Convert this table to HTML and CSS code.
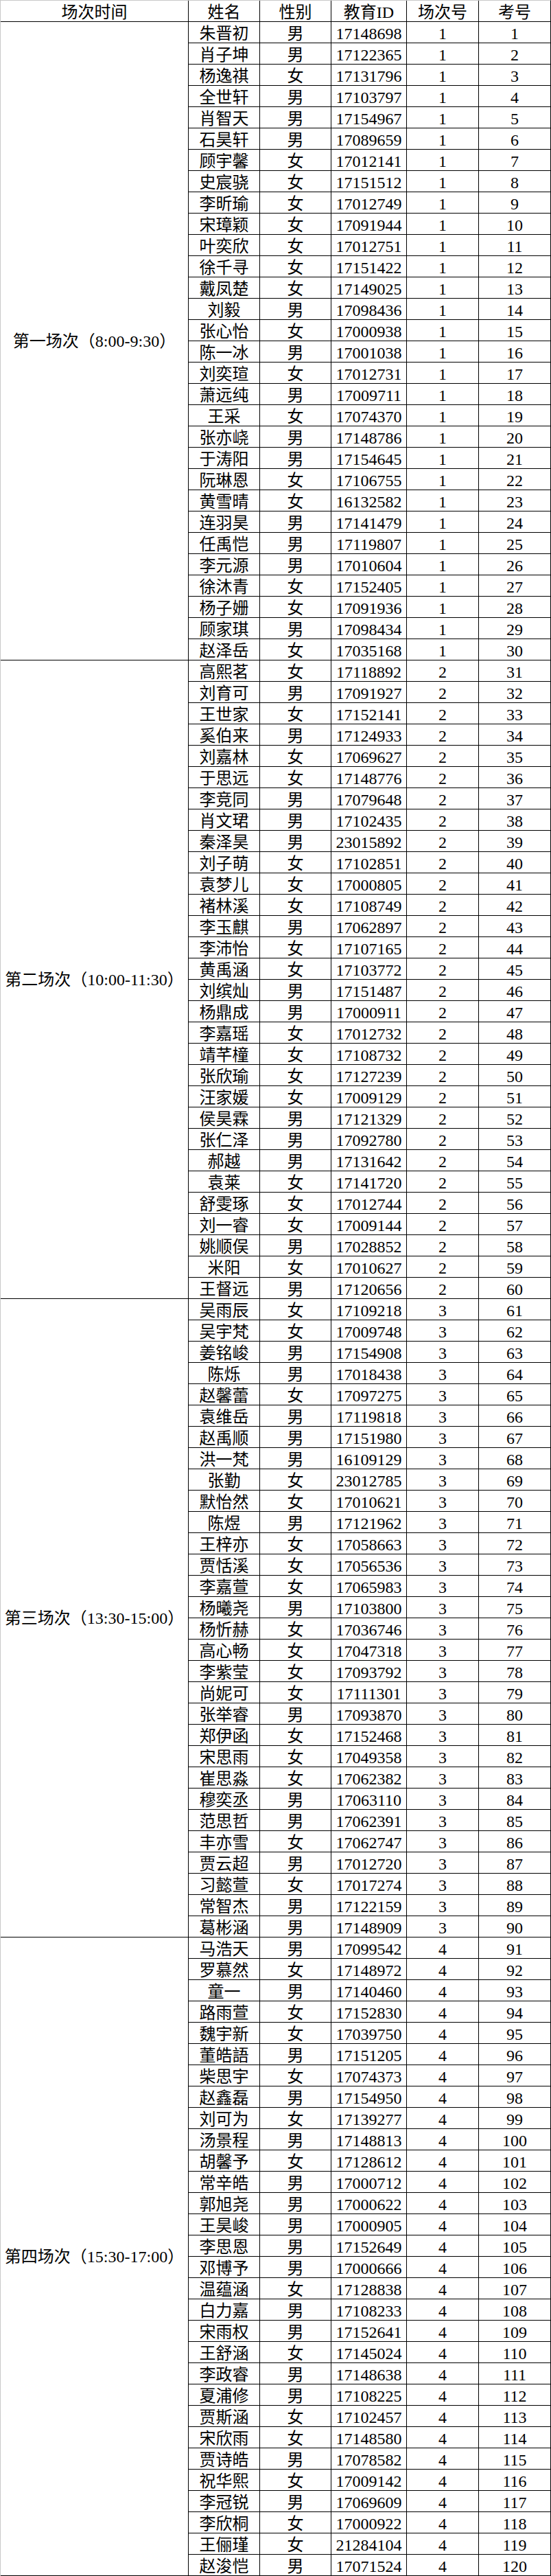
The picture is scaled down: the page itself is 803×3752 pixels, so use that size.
FILE: index.html
```html
<!DOCTYPE html>
<html lang="zh-CN">
<head>
<meta charset="utf-8">
<title>场次安排</title>
<link rel="stylesheet" href="styles.css">
</head>
<body>
<div class="sheet">
<div class="cell first">场次时间</div><div class="cell">姓名</div><div class="cell">性别</div><div class="cell">教育ID</div><div class="cell">场次号</div><div class="cell">考号</div>

<div class="cell sess">第一场次（8:00-9:30）</div>
<div class="cell">朱晋初</div><div class="cell">男</div><div class="cell">17148698</div><div class="cell">1</div><div class="cell">1</div>
<div class="cell">肖子坤</div><div class="cell">男</div><div class="cell">17122365</div><div class="cell">1</div><div class="cell">2</div>
<div class="cell">杨逸祺</div><div class="cell">女</div><div class="cell">17131796</div><div class="cell">1</div><div class="cell">3</div>
<div class="cell">全世轩</div><div class="cell">男</div><div class="cell">17103797</div><div class="cell">1</div><div class="cell">4</div>
<div class="cell">肖智天</div><div class="cell">男</div><div class="cell">17154967</div><div class="cell">1</div><div class="cell">5</div>
<div class="cell">石昊轩</div><div class="cell">男</div><div class="cell">17089659</div><div class="cell">1</div><div class="cell">6</div>
<div class="cell">顾宇馨</div><div class="cell">女</div><div class="cell">17012141</div><div class="cell">1</div><div class="cell">7</div>
<div class="cell">史宸骁</div><div class="cell">女</div><div class="cell">17151512</div><div class="cell">1</div><div class="cell">8</div>
<div class="cell">李昕瑜</div><div class="cell">女</div><div class="cell">17012749</div><div class="cell">1</div><div class="cell">9</div>
<div class="cell">宋璋颖</div><div class="cell">女</div><div class="cell">17091944</div><div class="cell">1</div><div class="cell">10</div>
<div class="cell">叶奕欣</div><div class="cell">女</div><div class="cell">17012751</div><div class="cell">1</div><div class="cell">11</div>
<div class="cell">徐千寻</div><div class="cell">女</div><div class="cell">17151422</div><div class="cell">1</div><div class="cell">12</div>
<div class="cell">戴凤楚</div><div class="cell">女</div><div class="cell">17149025</div><div class="cell">1</div><div class="cell">13</div>
<div class="cell">刘毅</div><div class="cell">男</div><div class="cell">17098436</div><div class="cell">1</div><div class="cell">14</div>
<div class="cell">张心怡</div><div class="cell">女</div><div class="cell">17000938</div><div class="cell">1</div><div class="cell">15</div>
<div class="cell">陈一冰</div><div class="cell">男</div><div class="cell">17001038</div><div class="cell">1</div><div class="cell">16</div>
<div class="cell">刘奕瑄</div><div class="cell">女</div><div class="cell">17012731</div><div class="cell">1</div><div class="cell">17</div>
<div class="cell">萧远纯</div><div class="cell">男</div><div class="cell">17009711</div><div class="cell">1</div><div class="cell">18</div>
<div class="cell">王采</div><div class="cell">女</div><div class="cell">17074370</div><div class="cell">1</div><div class="cell">19</div>
<div class="cell">张亦峣</div><div class="cell">男</div><div class="cell">17148786</div><div class="cell">1</div><div class="cell">20</div>
<div class="cell">于涛阳</div><div class="cell">男</div><div class="cell">17154645</div><div class="cell">1</div><div class="cell">21</div>
<div class="cell">阮琳恩</div><div class="cell">女</div><div class="cell">17106755</div><div class="cell">1</div><div class="cell">22</div>
<div class="cell">黄雪晴</div><div class="cell">女</div><div class="cell">16132582</div><div class="cell">1</div><div class="cell">23</div>
<div class="cell">连羽昊</div><div class="cell">男</div><div class="cell">17141479</div><div class="cell">1</div><div class="cell">24</div>
<div class="cell">任禹恺</div><div class="cell">男</div><div class="cell">17119807</div><div class="cell">1</div><div class="cell">25</div>
<div class="cell">李元源</div><div class="cell">男</div><div class="cell">17010604</div><div class="cell">1</div><div class="cell">26</div>
<div class="cell">徐沐青</div><div class="cell">女</div><div class="cell">17152405</div><div class="cell">1</div><div class="cell">27</div>
<div class="cell">杨子姗</div><div class="cell">女</div><div class="cell">17091936</div><div class="cell">1</div><div class="cell">28</div>
<div class="cell">顾家琪</div><div class="cell">男</div><div class="cell">17098434</div><div class="cell">1</div><div class="cell">29</div>
<div class="cell">赵泽岳</div><div class="cell">女</div><div class="cell">17035168</div><div class="cell">1</div><div class="cell">30</div>

<div class="cell sess">第二场次（10:00-11:30）</div>
<div class="cell">高熙茗</div><div class="cell">女</div><div class="cell">17118892</div><div class="cell">2</div><div class="cell">31</div>
<div class="cell">刘育可</div><div class="cell">男</div><div class="cell">17091927</div><div class="cell">2</div><div class="cell">32</div>
<div class="cell">王世家</div><div class="cell">女</div><div class="cell">17152141</div><div class="cell">2</div><div class="cell">33</div>
<div class="cell">奚伯来</div><div class="cell">男</div><div class="cell">17124933</div><div class="cell">2</div><div class="cell">34</div>
<div class="cell">刘嘉林</div><div class="cell">女</div><div class="cell">17069627</div><div class="cell">2</div><div class="cell">35</div>
<div class="cell">于思远</div><div class="cell">女</div><div class="cell">17148776</div><div class="cell">2</div><div class="cell">36</div>
<div class="cell">李竞同</div><div class="cell">男</div><div class="cell">17079648</div><div class="cell">2</div><div class="cell">37</div>
<div class="cell">肖文珺</div><div class="cell">男</div><div class="cell">17102435</div><div class="cell">2</div><div class="cell">38</div>
<div class="cell">秦泽昊</div><div class="cell">男</div><div class="cell">23015892</div><div class="cell">2</div><div class="cell">39</div>
<div class="cell">刘子萌</div><div class="cell">女</div><div class="cell">17102851</div><div class="cell">2</div><div class="cell">40</div>
<div class="cell">袁梦儿</div><div class="cell">女</div><div class="cell">17000805</div><div class="cell">2</div><div class="cell">41</div>
<div class="cell">褚林溪</div><div class="cell">女</div><div class="cell">17108749</div><div class="cell">2</div><div class="cell">42</div>
<div class="cell">李玉麒</div><div class="cell">男</div><div class="cell">17062897</div><div class="cell">2</div><div class="cell">43</div>
<div class="cell">李沛怡</div><div class="cell">女</div><div class="cell">17107165</div><div class="cell">2</div><div class="cell">44</div>
<div class="cell">黄禹涵</div><div class="cell">女</div><div class="cell">17103772</div><div class="cell">2</div><div class="cell">45</div>
<div class="cell">刘缤灿</div><div class="cell">男</div><div class="cell">17151487</div><div class="cell">2</div><div class="cell">46</div>
<div class="cell">杨鼎成</div><div class="cell">男</div><div class="cell">17000911</div><div class="cell">2</div><div class="cell">47</div>
<div class="cell">李嘉瑶</div><div class="cell">女</div><div class="cell">17012732</div><div class="cell">2</div><div class="cell">48</div>
<div class="cell">靖芊橦</div><div class="cell">女</div><div class="cell">17108732</div><div class="cell">2</div><div class="cell">49</div>
<div class="cell">张欣瑜</div><div class="cell">女</div><div class="cell">17127239</div><div class="cell">2</div><div class="cell">50</div>
<div class="cell">汪家媛</div><div class="cell">女</div><div class="cell">17009129</div><div class="cell">2</div><div class="cell">51</div>
<div class="cell">侯昊霖</div><div class="cell">男</div><div class="cell">17121329</div><div class="cell">2</div><div class="cell">52</div>
<div class="cell">张仁泽</div><div class="cell">男</div><div class="cell">17092780</div><div class="cell">2</div><div class="cell">53</div>
<div class="cell">郝越</div><div class="cell">男</div><div class="cell">17131642</div><div class="cell">2</div><div class="cell">54</div>
<div class="cell">袁莱</div><div class="cell">女</div><div class="cell">17141720</div><div class="cell">2</div><div class="cell">55</div>
<div class="cell">舒雯琢</div><div class="cell">女</div><div class="cell">17012744</div><div class="cell">2</div><div class="cell">56</div>
<div class="cell">刘一睿</div><div class="cell">女</div><div class="cell">17009144</div><div class="cell">2</div><div class="cell">57</div>
<div class="cell">姚顺俣</div><div class="cell">男</div><div class="cell">17028852</div><div class="cell">2</div><div class="cell">58</div>
<div class="cell">米阳</div><div class="cell">女</div><div class="cell">17010627</div><div class="cell">2</div><div class="cell">59</div>
<div class="cell">王督远</div><div class="cell">男</div><div class="cell">17120656</div><div class="cell">2</div><div class="cell">60</div>

<div class="cell sess">第三场次（13:30-15:00）</div>
<div class="cell">吴雨辰</div><div class="cell">女</div><div class="cell">17109218</div><div class="cell">3</div><div class="cell">61</div>
<div class="cell">吴宇梵</div><div class="cell">女</div><div class="cell">17009748</div><div class="cell">3</div><div class="cell">62</div>
<div class="cell">姜铭峻</div><div class="cell">男</div><div class="cell">17154908</div><div class="cell">3</div><div class="cell">63</div>
<div class="cell">陈烁</div><div class="cell">男</div><div class="cell">17018438</div><div class="cell">3</div><div class="cell">64</div>
<div class="cell">赵馨蕾</div><div class="cell">女</div><div class="cell">17097275</div><div class="cell">3</div><div class="cell">65</div>
<div class="cell">袁维岳</div><div class="cell">男</div><div class="cell">17119818</div><div class="cell">3</div><div class="cell">66</div>
<div class="cell">赵禹顺</div><div class="cell">男</div><div class="cell">17151980</div><div class="cell">3</div><div class="cell">67</div>
<div class="cell">洪一梵</div><div class="cell">男</div><div class="cell">16109129</div><div class="cell">3</div><div class="cell">68</div>
<div class="cell">张勤</div><div class="cell">女</div><div class="cell">23012785</div><div class="cell">3</div><div class="cell">69</div>
<div class="cell">默怡然</div><div class="cell">女</div><div class="cell">17010621</div><div class="cell">3</div><div class="cell">70</div>
<div class="cell">陈煜</div><div class="cell">男</div><div class="cell">17121962</div><div class="cell">3</div><div class="cell">71</div>
<div class="cell">王梓亦</div><div class="cell">女</div><div class="cell">17058663</div><div class="cell">3</div><div class="cell">72</div>
<div class="cell">贾恬溪</div><div class="cell">女</div><div class="cell">17056536</div><div class="cell">3</div><div class="cell">73</div>
<div class="cell">李嘉萱</div><div class="cell">女</div><div class="cell">17065983</div><div class="cell">3</div><div class="cell">74</div>
<div class="cell">杨曦尧</div><div class="cell">男</div><div class="cell">17103800</div><div class="cell">3</div><div class="cell">75</div>
<div class="cell">杨忻赫</div><div class="cell">女</div><div class="cell">17036746</div><div class="cell">3</div><div class="cell">76</div>
<div class="cell">高心畅</div><div class="cell">女</div><div class="cell">17047318</div><div class="cell">3</div><div class="cell">77</div>
<div class="cell">李紫莹</div><div class="cell">女</div><div class="cell">17093792</div><div class="cell">3</div><div class="cell">78</div>
<div class="cell">尚妮可</div><div class="cell">女</div><div class="cell">17111301</div><div class="cell">3</div><div class="cell">79</div>
<div class="cell">张举睿</div><div class="cell">男</div><div class="cell">17093870</div><div class="cell">3</div><div class="cell">80</div>
<div class="cell">郑伊函</div><div class="cell">女</div><div class="cell">17152468</div><div class="cell">3</div><div class="cell">81</div>
<div class="cell">宋思雨</div><div class="cell">女</div><div class="cell">17049358</div><div class="cell">3</div><div class="cell">82</div>
<div class="cell">崔思淼</div><div class="cell">女</div><div class="cell">17062382</div><div class="cell">3</div><div class="cell">83</div>
<div class="cell">穆奕丞</div><div class="cell">男</div><div class="cell">17063110</div><div class="cell">3</div><div class="cell">84</div>
<div class="cell">范思哲</div><div class="cell">男</div><div class="cell">17062391</div><div class="cell">3</div><div class="cell">85</div>
<div class="cell">丰亦雪</div><div class="cell">女</div><div class="cell">17062747</div><div class="cell">3</div><div class="cell">86</div>
<div class="cell">贾云超</div><div class="cell">男</div><div class="cell">17012720</div><div class="cell">3</div><div class="cell">87</div>
<div class="cell">习懿萱</div><div class="cell">女</div><div class="cell">17017274</div><div class="cell">3</div><div class="cell">88</div>
<div class="cell">常智杰</div><div class="cell">男</div><div class="cell">17122159</div><div class="cell">3</div><div class="cell">89</div>
<div class="cell">葛彬涵</div><div class="cell">男</div><div class="cell">17148909</div><div class="cell">3</div><div class="cell">90</div>

<div class="cell sess">第四场次（15:30-17:00）</div>
<div class="cell">马浩天</div><div class="cell">男</div><div class="cell">17099542</div><div class="cell">4</div><div class="cell">91</div>
<div class="cell">罗慕然</div><div class="cell">女</div><div class="cell">17148972</div><div class="cell">4</div><div class="cell">92</div>
<div class="cell">童一</div><div class="cell">男</div><div class="cell">17140460</div><div class="cell">4</div><div class="cell">93</div>
<div class="cell">路雨萱</div><div class="cell">女</div><div class="cell">17152830</div><div class="cell">4</div><div class="cell">94</div>
<div class="cell">魏宇新</div><div class="cell">女</div><div class="cell">17039750</div><div class="cell">4</div><div class="cell">95</div>
<div class="cell">董皓語</div><div class="cell">男</div><div class="cell">17151205</div><div class="cell">4</div><div class="cell">96</div>
<div class="cell">柴思宇</div><div class="cell">女</div><div class="cell">17074373</div><div class="cell">4</div><div class="cell">97</div>
<div class="cell">赵鑫磊</div><div class="cell">男</div><div class="cell">17154950</div><div class="cell">4</div><div class="cell">98</div>
<div class="cell">刘可为</div><div class="cell">女</div><div class="cell">17139277</div><div class="cell">4</div><div class="cell">99</div>
<div class="cell">汤景程</div><div class="cell">男</div><div class="cell">17148813</div><div class="cell">4</div><div class="cell">100</div>
<div class="cell">胡馨予</div><div class="cell">女</div><div class="cell">17128612</div><div class="cell">4</div><div class="cell">101</div>
<div class="cell">常辛皓</div><div class="cell">男</div><div class="cell">17000712</div><div class="cell">4</div><div class="cell">102</div>
<div class="cell">郭旭尧</div><div class="cell">男</div><div class="cell">17000622</div><div class="cell">4</div><div class="cell">103</div>
<div class="cell">王昊峻</div><div class="cell">男</div><div class="cell">17000905</div><div class="cell">4</div><div class="cell">104</div>
<div class="cell">李思恩</div><div class="cell">男</div><div class="cell">17152649</div><div class="cell">4</div><div class="cell">105</div>
<div class="cell">邓博予</div><div class="cell">男</div><div class="cell">17000666</div><div class="cell">4</div><div class="cell">106</div>
<div class="cell">温蕴涵</div><div class="cell">女</div><div class="cell">17128838</div><div class="cell">4</div><div class="cell">107</div>
<div class="cell">白力嘉</div><div class="cell">男</div><div class="cell">17108233</div><div class="cell">4</div><div class="cell">108</div>
<div class="cell">宋雨权</div><div class="cell">男</div><div class="cell">17152641</div><div class="cell">4</div><div class="cell">109</div>
<div class="cell">王舒涵</div><div class="cell">女</div><div class="cell">17145024</div><div class="cell">4</div><div class="cell">110</div>
<div class="cell">李政睿</div><div class="cell">男</div><div class="cell">17148638</div><div class="cell">4</div><div class="cell">111</div>
<div class="cell">夏浦修</div><div class="cell">男</div><div class="cell">17108225</div><div class="cell">4</div><div class="cell">112</div>
<div class="cell">贾斯涵</div><div class="cell">女</div><div class="cell">17102457</div><div class="cell">4</div><div class="cell">113</div>
<div class="cell">宋欣雨</div><div class="cell">女</div><div class="cell">17148580</div><div class="cell">4</div><div class="cell">114</div>
<div class="cell">贾诗皓</div><div class="cell">男</div><div class="cell">17078582</div><div class="cell">4</div><div class="cell">115</div>
<div class="cell">祝华熙</div><div class="cell">女</div><div class="cell">17009142</div><div class="cell">4</div><div class="cell">116</div>
<div class="cell">李冠锐</div><div class="cell">男</div><div class="cell">17069609</div><div class="cell">4</div><div class="cell">117</div>
<div class="cell">李欣桐</div><div class="cell">女</div><div class="cell">17000922</div><div class="cell">4</div><div class="cell">118</div>
<div class="cell">王俪瑾</div><div class="cell">女</div><div class="cell">21284104</div><div class="cell">4</div><div class="cell">119</div>
<div class="cell">赵浚恺</div><div class="cell">男</div><div class="cell">17071524</div><div class="cell">4</div><div class="cell">120</div>
</div>
</body>
</html>
```

FILE: styles.css
```css
html, body {
  margin: 0;
  padding: 0;
  background: #ffffff;
}

.sheet {
  box-sizing: border-box;
  width: 803px;
  display: grid;
  grid-template-columns: 273px 104px 104px 110px 105px 105px;
  grid-auto-rows: 31px;
  border-top: 1px solid #c8c8c8;
  border-left: 1px solid #c8c8c8;
  border-right: 1px solid #000000;
  font-family: "Liberation Serif", "Noto Sans CJK SC", serif;
  font-size: 24px;
  line-height: 30px;
  color: #000000;
}

.cell {
  border-left: 1px solid #000000;
  border-bottom: 1px solid #000000;
  padding-top: 2px;
  text-align: center;
  white-space: nowrap;
  overflow: visible;
}

.cell.first {
  border-left: none;
}

.cell.sess {
  grid-row: span 30;
  border-left: none;
  padding-top: 0;
  display: flex;
  align-items: center;
  justify-content: center;
}
```
